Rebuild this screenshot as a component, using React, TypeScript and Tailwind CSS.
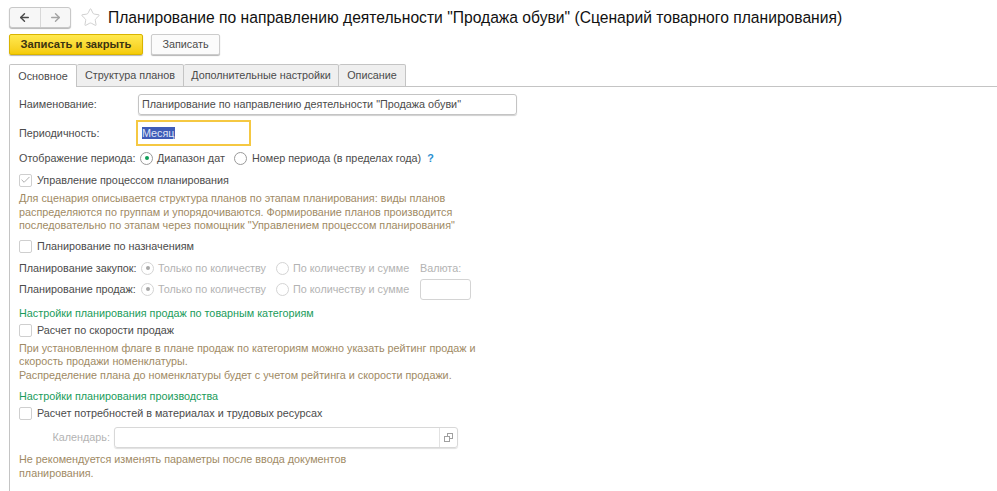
import React from "react";
import { ArrowLeft, ArrowRight, Star, Check } from "lucide-react";

const tabs = ["Основное", "Структура планов", "Дополнительные настройки", "Описание"];
const tabWidths = ["w-[68px]", "w-[107px]", "w-[155px]", "w-[67px]"];

const Radio = (props: { checked?: boolean; disabled?: boolean }) => (
  <span
    className={
      "w-[13px] h-[13px] rounded-full border flex items-center justify-center bg-white shrink-0 " +
      (props.disabled ? "border-[#d4d4d4]" : "border-[#9a9a9a]")
    }
  >
    {props.checked && (
      <span
        className={
          "w-[4px] h-[4px] rounded-full " +
          (props.disabled ? "bg-[#a8a8a8]" : "bg-[#0f9d58]")
        }
      />
    )}
  </span>
);

const CheckRow = (props: { label: string; checked?: boolean; className?: string }) => (
  <div className={"flex items-center h-[16px] " + (props.className ?? "")}>
    <span className="w-[13px] h-[13px] rounded-[2px] border border-[#cfcfcf] bg-white flex items-center justify-center shrink-0">
      {props.checked && <Check size={12} strokeWidth={2} className="text-[#a6a6a6]" />}
    </span>
    <span className="ml-[5px] text-[#4b4b4b]">{props.label}</span>
  </div>
);

const Note = (props: { lines: string[]; className?: string }) => (
  <div className={"text-[#a08a64] " + (props.className ?? "leading-[13.5px]")}>
    {props.lines.map((line) => (
      <div key={line}>{line}</div>
    ))}
  </div>
);

const PlanRow = (props: { label: string; className?: string; children?: React.ReactNode }) => (
  <div className={"flex items-center h-[21px] " + (props.className ?? "")}>
    <span className="w-[122px] text-[#4b4b4b] shrink-0 whitespace-nowrap">{props.label}</span>
    <Radio checked disabled />
    <span className="ml-[4px] w-[118px] text-[#b3b3b3] whitespace-nowrap">Только по количеству</span>
    <Radio disabled />
    <span className="ml-[4px] text-[#b3b3b3] w-[118px] whitespace-nowrap">По количеству и сумме</span>
    {props.children}
  </div>
);

export default function App() {
  return (
    <div className="w-[997px] h-[491px] overflow-hidden bg-white text-[10.8px] font-['Liberation_Sans',Arial,sans-serif]">
      <div className="flex items-center h-[34px] pl-[9px] pt-[1px]">
        <div className="flex h-[21px] w-[62px] rounded-[3px] border border-[#c8c8c8] shadow-[0_1px_1px_#b5b5b5] bg-[#f7f7f7]">
          <span className="w-[31px] flex items-center justify-center border-r border-[#d8d8d8]">
            <ArrowLeft size={13} strokeWidth={2.6} className="text-[#4a4a4a]" />
          </span>
          <span className="w-[30px] flex items-center justify-center">
            <ArrowRight size={13} strokeWidth={2.6} className="text-[#a3a3a3]" />
          </span>
        </div>
        <Star size={21} strokeWidth={1} className="ml-[9px] text-[#c9c9c9]" />
        <h1 className="ml-[7px] text-[15.65px] text-[#111] whitespace-nowrap">
          Планирование по направлению деятельности "Продажа обуви" (Сценарий товарного планирования)
        </h1>
      </div>

      <div className="flex items-center gap-[8px] pl-[9px] h-[21px]">
        <button className="w-[134px] h-[21px] rounded-[2px] border border-[#d9b400] bg-gradient-to-b from-[#ffe94d] to-[#f5cb00] text-[#3b3410] font-bold text-[11.2px] shadow-[0_1px_1px_#b5b5b5]">
          Записать и закрыть
        </button>
        <button className="w-[69px] h-[21px] rounded-[2px] border border-[#cccccc] bg-[#fbfbfb] text-[#4b4b4b] shadow-[0_1px_1px_#b5b5b5]">
          Записать
        </button>
      </div>

      <div className="flex pl-[9px] mt-[9px] h-[23px]">
        {tabs.map((tab, i) => (
          <div
            key={tab}
            className={
              "flex items-center justify-center text-[#4b4b4b] border-t border-r border-[#c4c4c4] rounded-t-[2px] " +
              tabWidths[i] +
              (i === 0
                ? " bg-white border-l h-[23px] relative z-10"
                : " bg-[#efefef] border-b h-[23px]")
            }
          >
            {tab}
          </div>
        ))}
      </div>

      <div className="ml-[9px] border-l border-t border-[#c4c4c4] -mt-[1px] h-[405px] pl-[9px] pt-[7px]">
        <div className="flex items-center h-[21px]">
          <span className="w-[119px] text-[#4b4b4b]">Наименование:</span>
          <div className="w-[379px] h-[21px] border border-[#c4c4c4] rounded-[3px] flex items-center pl-[3px] text-[#4b4b4b] shadow-[0_1px_1px_#d0d0d0]">
            Планирование по направлению деятельности "Продажа обуви"
          </div>
        </div>

        <div className="flex items-center h-[26px] mt-[5px]">
          <span className="w-[117px] text-[#4b4b4b]">Периодичность:</span>
          <div className="w-[115px] h-[26px] border-2 border-[#f5c842] flex items-center pl-[4px]">
            <span className="bg-[#3f5cb8] text-[#dfe4f5] leading-[12px]">Месяц</span>
          </div>
        </div>

        <div className="flex items-center h-[16px] mt-[4px]">
          <span className="w-[121px] text-[#4b4b4b] whitespace-nowrap">Отображение периода:</span>
          <Radio checked />
          <span className="ml-[4px] w-[77px] text-[#4b4b4b] whitespace-nowrap">Диапазон дат</span>
          <Radio />
          <span className="ml-[5px] text-[#4b4b4b] whitespace-nowrap">Номер периода (в пределах года)</span>
          <span className="ml-[6px] text-[#2a8fd0] font-bold">?</span>
        </div>

        <CheckRow label="Управление процессом планирования" checked className="mt-[6px]" />

        <Note
          className="mt-[4px] leading-[13.5px]"
          lines={[
            "Для сценария описывается структура планов по этапам планирования: виды планов",
            "распределяются по группам и упорядочиваются. Формирование планов производится",
            'последовательно по этапам через помощник "Управлением процессом планирования"',
          ]}
        />

        <CheckRow label="Планирование по назначениям" className="mt-[6px]" />

        <PlanRow label="Планирование закупок:" className="mt-[3px]">
          <span className="ml-[9px] text-[#b3b3b3]">Валюта:</span>
        </PlanRow>
        <PlanRow label="Планирование продаж:">
          <span className="ml-[9px] w-[51px] h-[21px] border border-[#d4d4d4] rounded-[3px]" />
        </PlanRow>

        <div className="text-[#1a9c5b] mt-[6px] leading-[14px]">Настройки планирования продаж по товарным категориям</div>
        <CheckRow label="Расчет по скорости продаж" className="mt-[3px]" />
        <Note
          className="mt-[3px] leading-[13.5px]"
          lines={[
            "При установленном флаге в плане продаж по категориям можно указать рейтинг продаж и",
            "скорость продажи номенклатуры.",
            "Распределение плана до номенклатуры будет с учетом рейтинга и скорости продажи.",
          ]}
        />

        <div className="text-[#1a9c5b] mt-[7px] leading-[14px]">Настройки планирования производства</div>
        <CheckRow label="Расчет потребностей в материалах и трудовых ресурсах" className="mt-[2px]" />

        <div className="flex items-center h-[21px] mt-[6px]">
          <span className="w-[95px] text-right text-[#b3b3b3] pr-[4px]">Календарь:</span>
          <div className="w-[344px] h-[21px] border border-[#d8d8d8] rounded-[3px] flex justify-end shadow-[0_1px_1px_#e0e0e0]">
            <span className="w-[18px] border-l border-[#e2e2e2] flex items-center justify-center">
              <svg width="9" height="9" viewBox="0 0 9 9" fill="none" stroke="#a0a0a0" strokeWidth="1">
                <rect x="3.5" y="0.5" width="5" height="5" />
                <rect x="0.5" y="3.5" width="5" height="5" fill="#fff" />
              </svg>
            </span>
          </div>
        </div>

        <Note
          className="mt-[4px] leading-[14px]"
          lines={["Не рекомендуется изменять параметры после ввода документов", "планирования."]}
        />
      </div>
    </div>
  );
}
